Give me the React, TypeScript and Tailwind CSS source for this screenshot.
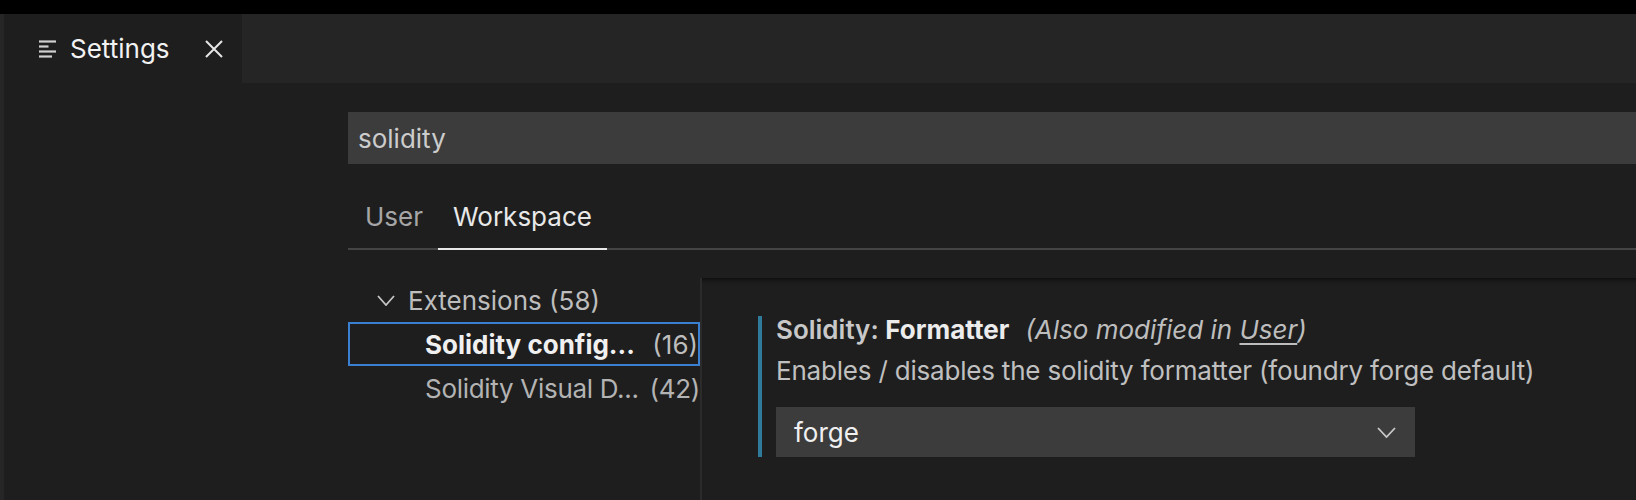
import React from 'react'

const font = "font-['Inter','Liberation_Sans',sans-serif]"

function ListIcon() {
  return (
    <svg width="18" height="18" viewBox="0 0 18 18" className="shrink-0">
      <g stroke="#d0d0d0" strokeWidth="2.2">
        <line x1="0" y1="1.5" x2="17" y2="1.5" />
        <line x1="0" y1="6.5" x2="9.5" y2="6.5" />
        <line x1="0" y1="11.5" x2="17" y2="11.5" />
        <line x1="0" y1="16.5" x2="13" y2="16.5" />
      </g>
    </svg>
  )
}

function CloseIcon() {
  return (
    <svg width="18" height="18" viewBox="0 0 18 18" className="shrink-0">
      <path d="M1 1 L17 17 M17 1 L1 17" stroke="#e6e6e6" strokeWidth="2" fill="none" />
    </svg>
  )
}

function Chevron({ w, h, color }: { w: number; h: number; color: string }) {
  return (
    <svg width={w} height={h} viewBox={`0 0 ${w} ${h}`} className="shrink-0">
      <polyline points={`1,1 ${w / 2},${h - 1} ${w - 1},1`} stroke={color} strokeWidth="1.8" fill="none" />
    </svg>
  )
}

export default function App() {
  return (
    <div className={`w-full h-[500px] overflow-hidden flex flex-col bg-[#1e1e1e] ${font}`}>
      <div className="h-[14px] bg-black shrink-0" />
      <div className="flex flex-1 min-h-0">
        {/* left edge strip */}
        <div className="w-[4px] bg-[#262626] shrink-0" />

        <div className="flex-1 flex flex-col min-w-0">
          {/* editor tabs */}
          <div className="h-[69px] bg-[#252526] flex shrink-0">
            <div className="w-[238px] bg-[#1e1e1e] flex items-center pl-[35px]">
              <ListIcon />
              <span className="ml-[13px] text-[26px] leading-[28px] text-[#f2f2f2]">Settings</span>
              <span className="ml-auto mr-[19px]">
                <CloseIcon />
              </span>
            </div>
          </div>

          {/* settings editor */}
          <div className="flex-1 flex flex-col pl-[344px] min-h-0">
            <div className="mt-[29px] h-[52px] bg-[#3c3c3c] flex items-center pl-[10px]">
              <span className="text-[26px] text-[#cccccc]">solidity</span>
            </div>

            <div className="flex h-[86px] border-b-2 border-[#444444]">
              <div className="pl-[17px] pr-[15px] pt-[39px] text-[26px] leading-[28px] text-[#a6a6a6]">User</div>
              <div className="px-[15px] pt-[39px] text-[26px] leading-[28px] text-[#e8e8e8] border-b-2 border-[#e8e8e8] -mb-[2px]">
                Workspace
              </div>
            </div>

            <div className="mt-[28px] flex flex-1 min-h-0">
              {/* table of contents */}
              <div className="w-[352px] shrink-0 flex flex-col text-[26px]">
                <div className="h-[44px] flex items-center pl-[29px]">
                  <Chevron w={18} h={11} color="#c5c5c5" />
                  <span className="ml-[13px] text-[#bdbdbd]">Extensions (58)</span>
                </div>
                <div className="h-[44px] flex items-center pl-[75px] border-2 border-[#3b7fd0]">
                  <span className="font-bold text-[#f0f0f0]">Solidity config...</span>
                  <span className="ml-auto text-[#bdbdbd]">(16)</span>
                </div>
                <div className="h-[44px] flex items-center pl-[77px] tracking-[-0.3px]">
                  <span className="text-[#b3b3b3]">Solidity Visual D...</span>
                  <span className="ml-auto text-[#b3b3b3]">(42)</span>
                </div>
              </div>

              {/* settings list */}
              <div className="flex-1 border-l-2 border-[#2b2b2b] shadow-[inset_0_6px_6px_-6px_#000] pl-[56px] pt-[38px]">
                <div className="border-l-4 border-[#2f7b9c] pl-[14px] text-[26px]">
                  <div className="h-[28px] leading-[28px] flex items-baseline whitespace-nowrap">
                    <span className="font-semibold text-[#c8c8c8]">Solidity:&nbsp;</span>
                    <span className="font-bold text-[#ececec]">Formatter</span>
                    <span className="ml-[16px] italic text-[#bdbdbd]">
                      (Also modified in <span className="underline underline-offset-4">User</span>)
                    </span>
                  </div>
                  <div className="mt-[13px] h-[28px] leading-[28px] text-[#c0c0c0] whitespace-nowrap tracking-[-0.2px]">
                    Enables / disables the solidity formatter (foundry forge default)
                  </div>
                  <div className="mt-[22px] w-[639px] h-[50px] bg-[#3c3c3c] flex items-center justify-between pl-[18px] pr-[19px]">
                    <span className="text-[#f0f0f0]">forge</span>
                    <Chevron w={19} h={11} color="#c8c8c8" />
                  </div>
                </div>
              </div>
            </div>
          </div>
        </div>
      </div>
    </div>
  )
}
